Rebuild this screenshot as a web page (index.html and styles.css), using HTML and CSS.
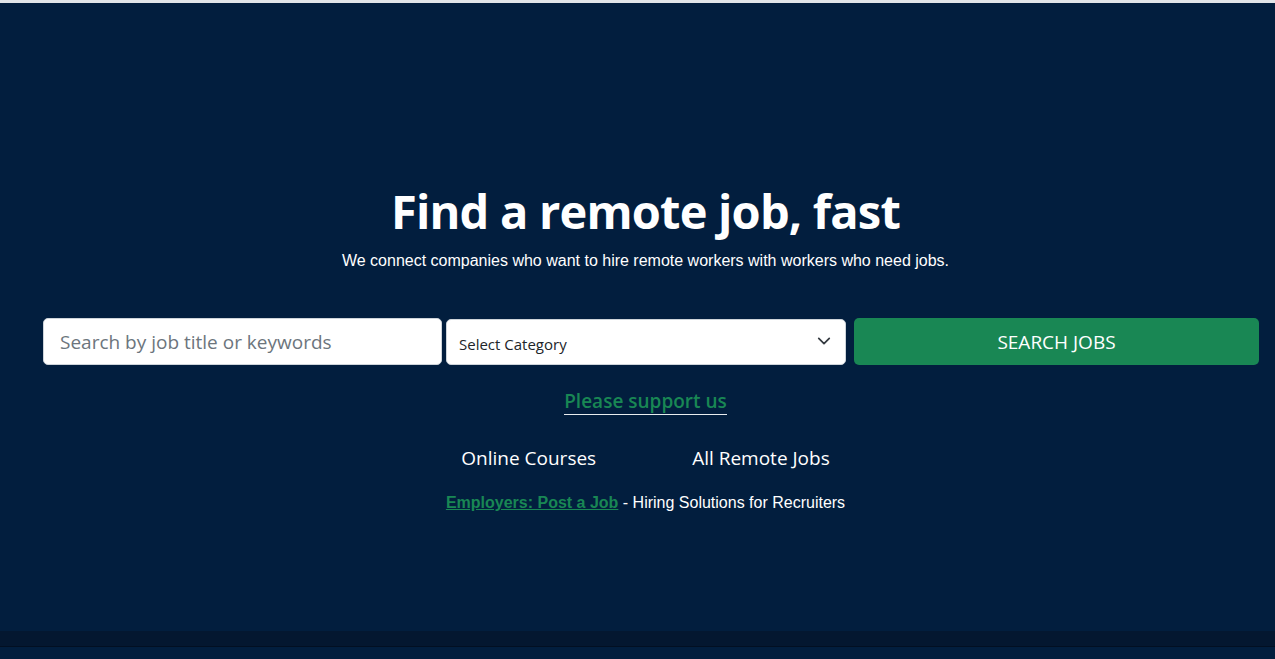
FILE: index.html
```html
<!DOCTYPE html>
<html lang="en">
<head>
<meta charset="utf-8">
<title>Find a remote job, fast</title>
<link rel="stylesheet" href="styles.css">
</head>
<body>
<div class="topline"></div>
<section class="hero">
  <div class="hero-inner">
    <h1 class="title">Find a remote job, fast</h1>
    <p class="lead">We connect companies who want to hire remote workers with workers who need jobs.</p>
    <form class="search">
      <input class="field" type="text" placeholder="Search by job title or keywords">
      <div class="select">
        <span>Select Category</span>
        <svg width="14" height="14" viewBox="0 0 16 16"><path d="M2 5l6 6 6-6" fill="none" stroke="#343a40" stroke-width="2" stroke-linecap="round" stroke-linejoin="round"/></svg>
      </div>
      <button class="btn" type="button">SEARCH JOBS</button>
    </form>
    <div class="support"><a href="#">Please support us</a></div>
    <nav class="links">
      <a href="#">Online Courses</a>
      <a href="#">All Remote Jobs</a>
    </nav>
    <p class="employers"><a href="#">Employers: Post a Job</a> - Hiring Solutions for Recruiters</p>
  </div>
</section>
<footer class="band"></footer>
<div class="bottom"></div>
</body>
</html>
```
FILE: styles.css
```css
html, body {
  margin: 0;
  padding: 0;
  background: #021e3e;
}
body {
  font-family: "Open Sans", "Noto Sans", sans-serif;
  color: #fff;
}
.topline {
  height: 3px;
  background: #e2e5e9;
}
.hero {
  background: #021e3e;
  height: 628px;
  padding-left: 16px;
  box-sizing: border-box;
  padding-top: 178px;
}
.hero-inner {
  text-align: center;
}
.title {
  margin: 0;
  font-size: 47px;
  font-weight: 700;
  line-height: 60px;
  letter-spacing: -0.8px;
}
.lead {
  margin: 8px 0 0;
  font-family: "Liberation Sans", Arial, sans-serif;
  font-size: 16px;
  line-height: 24px;
}
.search {
  display: flex;
  gap: 4px;
  margin: 45px 16px 0 27px;
  height: 47px;
}
.field {
  flex: 0 0 399px;
  box-sizing: border-box;
  height: 47px;
  border: 1px solid #ced4da;
  border-radius: 5px;
  padding: 0 16px;
  font-family: inherit;
  font-size: 19px;
  color: #212529;
  background: #fff;
  outline: none;
}
.field::placeholder {
  color: #6c757d;
}
.select {
  flex: 0 0 400px;
  box-sizing: border-box;
  margin-top: 1px;
  height: 46px;
  border: 1px solid #ced4da;
  border-radius: 5px;
  background: #fff;
  color: #212529;
  display: flex;
  align-items: center;
  justify-content: space-between;
  padding: 3px 14px 0 12px;
  font-size: 15px;
  text-align: left;
}
.select svg {
  margin-top: -6px;
}
.btn {
  flex: 1;
  margin-left: 4px;
  height: 47px;
  border: 0;
  border-radius: 5px;
  background: #198754;
  color: #fff;
  font-family: inherit;
  font-size: 19px;
}
.support {
  margin-top: 24px;
  line-height: 24px;
}
.support a {
  color: #198754;
  font-size: 19px;
  font-weight: 600;
  text-decoration: none;
  border-bottom: 1px solid #e8ecef;
  padding-bottom: 0;
}
.links {
  margin-top: 31px;
  display: flex;
  justify-content: center;
  gap: 96px;
}
.links a {
  color: #fff;
  font-size: 19px;
  text-decoration: none;
}
.employers {
  margin: 23px 0 0;
  font-family: "Liberation Sans", Arial, sans-serif;
  font-size: 16px;
}
.employers a {
  color: #198754;
  font-weight: 700;
  text-decoration: underline;
}
.band {
  height: 15px;
  background: #041730;
  border-bottom: 1px solid #020f22;
}
.bottom {
  height: 20px;
  background: #021e3e;
}
```
